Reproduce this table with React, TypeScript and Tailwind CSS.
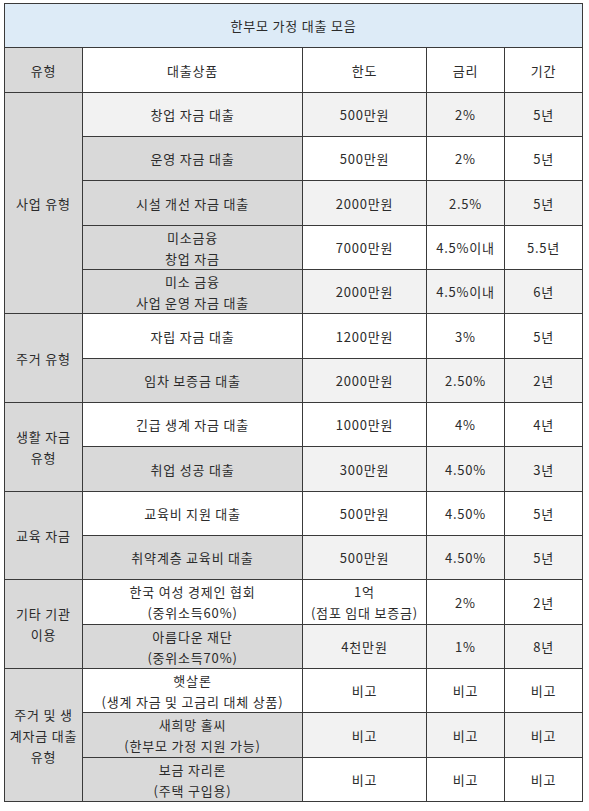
type Row = {
  name: string[]
  limit: string[]
  rate: string
  term: string
  nameBg: string
  valBg: string
  h: string
}

type Group = {
  label: string[]
  rows: Row[]
}

const GRAY = 'bg-[#d9d9d9]'
const LIGHT = 'bg-[#f2f2f2]'
const WHITE = 'bg-white'

const groups: Group[] = [
  {
    label: ['사업 유형'],
    rows: [
      { name: ['창업 자금 대출'], limit: ['500만원'], rate: '2%', term: '5년', nameBg: LIGHT, valBg: LIGHT, h: 'h-[44px]' },
      { name: ['운영 자금 대출'], limit: ['500만원'], rate: '2%', term: '5년', nameBg: GRAY, valBg: WHITE, h: 'h-[44px]' },
      { name: ['시설 개선 자금 대출'], limit: ['2000만원'], rate: '2.5%', term: '5년', nameBg: GRAY, valBg: LIGHT, h: 'h-[45px]' },
      { name: ['미소금융', '창업 자금'], limit: ['7000만원'], rate: '4.5%이내', term: '5.5년', nameBg: GRAY, valBg: WHITE, h: 'h-[44px]' },
      { name: ['미소 금융', '사업 운영 자금 대출'], limit: ['2000만원'], rate: '4.5%이내', term: '6년', nameBg: GRAY, valBg: LIGHT, h: 'h-[44px]' },
    ],
  },
  {
    label: ['주거 유형'],
    rows: [
      { name: ['자립 자금 대출'], limit: ['1200만원'], rate: '3%', term: '5년', nameBg: WHITE, valBg: WHITE, h: 'h-[45px]' },
      { name: ['임차 보증금 대출'], limit: ['2000만원'], rate: '2.50%', term: '2년', nameBg: GRAY, valBg: LIGHT, h: 'h-[44px]' },
    ],
  },
  {
    label: ['생활 자금', '유형'],
    rows: [
      { name: ['긴급 생계 자금 대출'], limit: ['1000만원'], rate: '4%', term: '4년', nameBg: WHITE, valBg: WHITE, h: 'h-[44px]' },
      { name: ['취업 성공 대출'], limit: ['300만원'], rate: '4.50%', term: '3년', nameBg: GRAY, valBg: LIGHT, h: 'h-[45px]' },
    ],
  },
  {
    label: ['교육 자금'],
    rows: [
      { name: ['교육비 지원 대출'], limit: ['500만원'], rate: '4.50%', term: '5년', nameBg: WHITE, valBg: WHITE, h: 'h-[44px]' },
      { name: ['취약계층 교육비 대출'], limit: ['500만원'], rate: '4.50%', term: '5년', nameBg: GRAY, valBg: LIGHT, h: 'h-[44px]' },
    ],
  },
  {
    label: ['기타 기관', '이용'],
    rows: [
      { name: ['한국 여성 경제인 협회', '(중위소득60%)'], limit: ['1억', '(점포 임대 보증금)'], rate: '2%', term: '2년', nameBg: WHITE, valBg: WHITE, h: 'h-[45px]' },
      { name: ['아름다운 재단', '(중위소득70%)'], limit: ['4천만원'], rate: '1%', term: '8년', nameBg: GRAY, valBg: LIGHT, h: 'h-[44px]' },
    ],
  },
  {
    label: ['주거 및 생', '계자금 대출', '유형'],
    rows: [
      { name: ['햇살론', '(생계 자금 및 고금리 대체 상품)'], limit: ['비고'], rate: '비고', term: '비고', nameBg: WHITE, valBg: WHITE, h: 'h-[44px]' },
      { name: ['새희망 홀씨', '(한부모 가정 지원 가능)'], limit: ['비고'], rate: '비고', term: '비고', nameBg: GRAY, valBg: LIGHT, h: 'h-[45px]' },
      { name: ['보금 자리론', '(주택 구입용)'], limit: ['비고'], rate: '비고', term: '비고', nameBg: GRAY, valBg: WHITE, h: 'h-[44px]' },
    ],
  },
]

const cell = 'border border-[#3a3a3a] text-center align-middle px-0 py-0 leading-[21px]'

function Lines({ lines }: { lines: string[] }) {
  return (
    <>
      {lines.map((l, i) => (
        <div key={i} className="whitespace-nowrap">{l}</div>
      ))}
    </>
  )
}

export default function App() {
  return (
    <div className="min-h-screen bg-white pl-[4px] pt-[3px] text-[13px] tracking-[0.8px] text-[#2b2b2b] font-['Noto_Sans_CJK_KR','Noto_Sans',sans-serif]">
      <table className="w-[578px] table-fixed border-collapse">
        <colgroup>
          <col className="w-[78px]" />
          <col className="w-[220px]" />
          <col className="w-[124px]" />
          <col className="w-[78px]" />
          <col className="w-[78px]" />
        </colgroup>
        <tbody>
          <tr className="h-[44px]">
            <td colSpan={5} className={`${cell} bg-[#ddebf7]`}>한부모 가정 대출 모음</td>
          </tr>
          <tr className="h-[45px]">
            <td className={`${cell} ${GRAY}`}>유형</td>
            <td className={`${cell} bg-white`}>대출상품</td>
            <td className={`${cell} bg-white`}>한도</td>
            <td className={`${cell} bg-white`}>금리</td>
            <td className={`${cell} bg-white`}>기간</td>
          </tr>
          {groups.map((g) =>
            g.rows.map((r, i) => (
              <tr key={g.label.join() + i} className={r.h}>
                {i === 0 && (
                  <td rowSpan={g.rows.length} className={`${cell} ${GRAY}`}>
                    <Lines lines={g.label} />
                  </td>
                )}
                <td className={`${cell} ${r.nameBg}`}>
                  <Lines lines={r.name} />
                </td>
                <td className={`${cell} ${r.valBg}`}>
                  <Lines lines={r.limit} />
                </td>
                <td className={`${cell} ${r.valBg}`}>{r.rate}</td>
                <td className={`${cell} ${r.valBg}`}>{r.term}</td>
              </tr>
            ))
          )}
        </tbody>
      </table>
    </div>
  )
}
